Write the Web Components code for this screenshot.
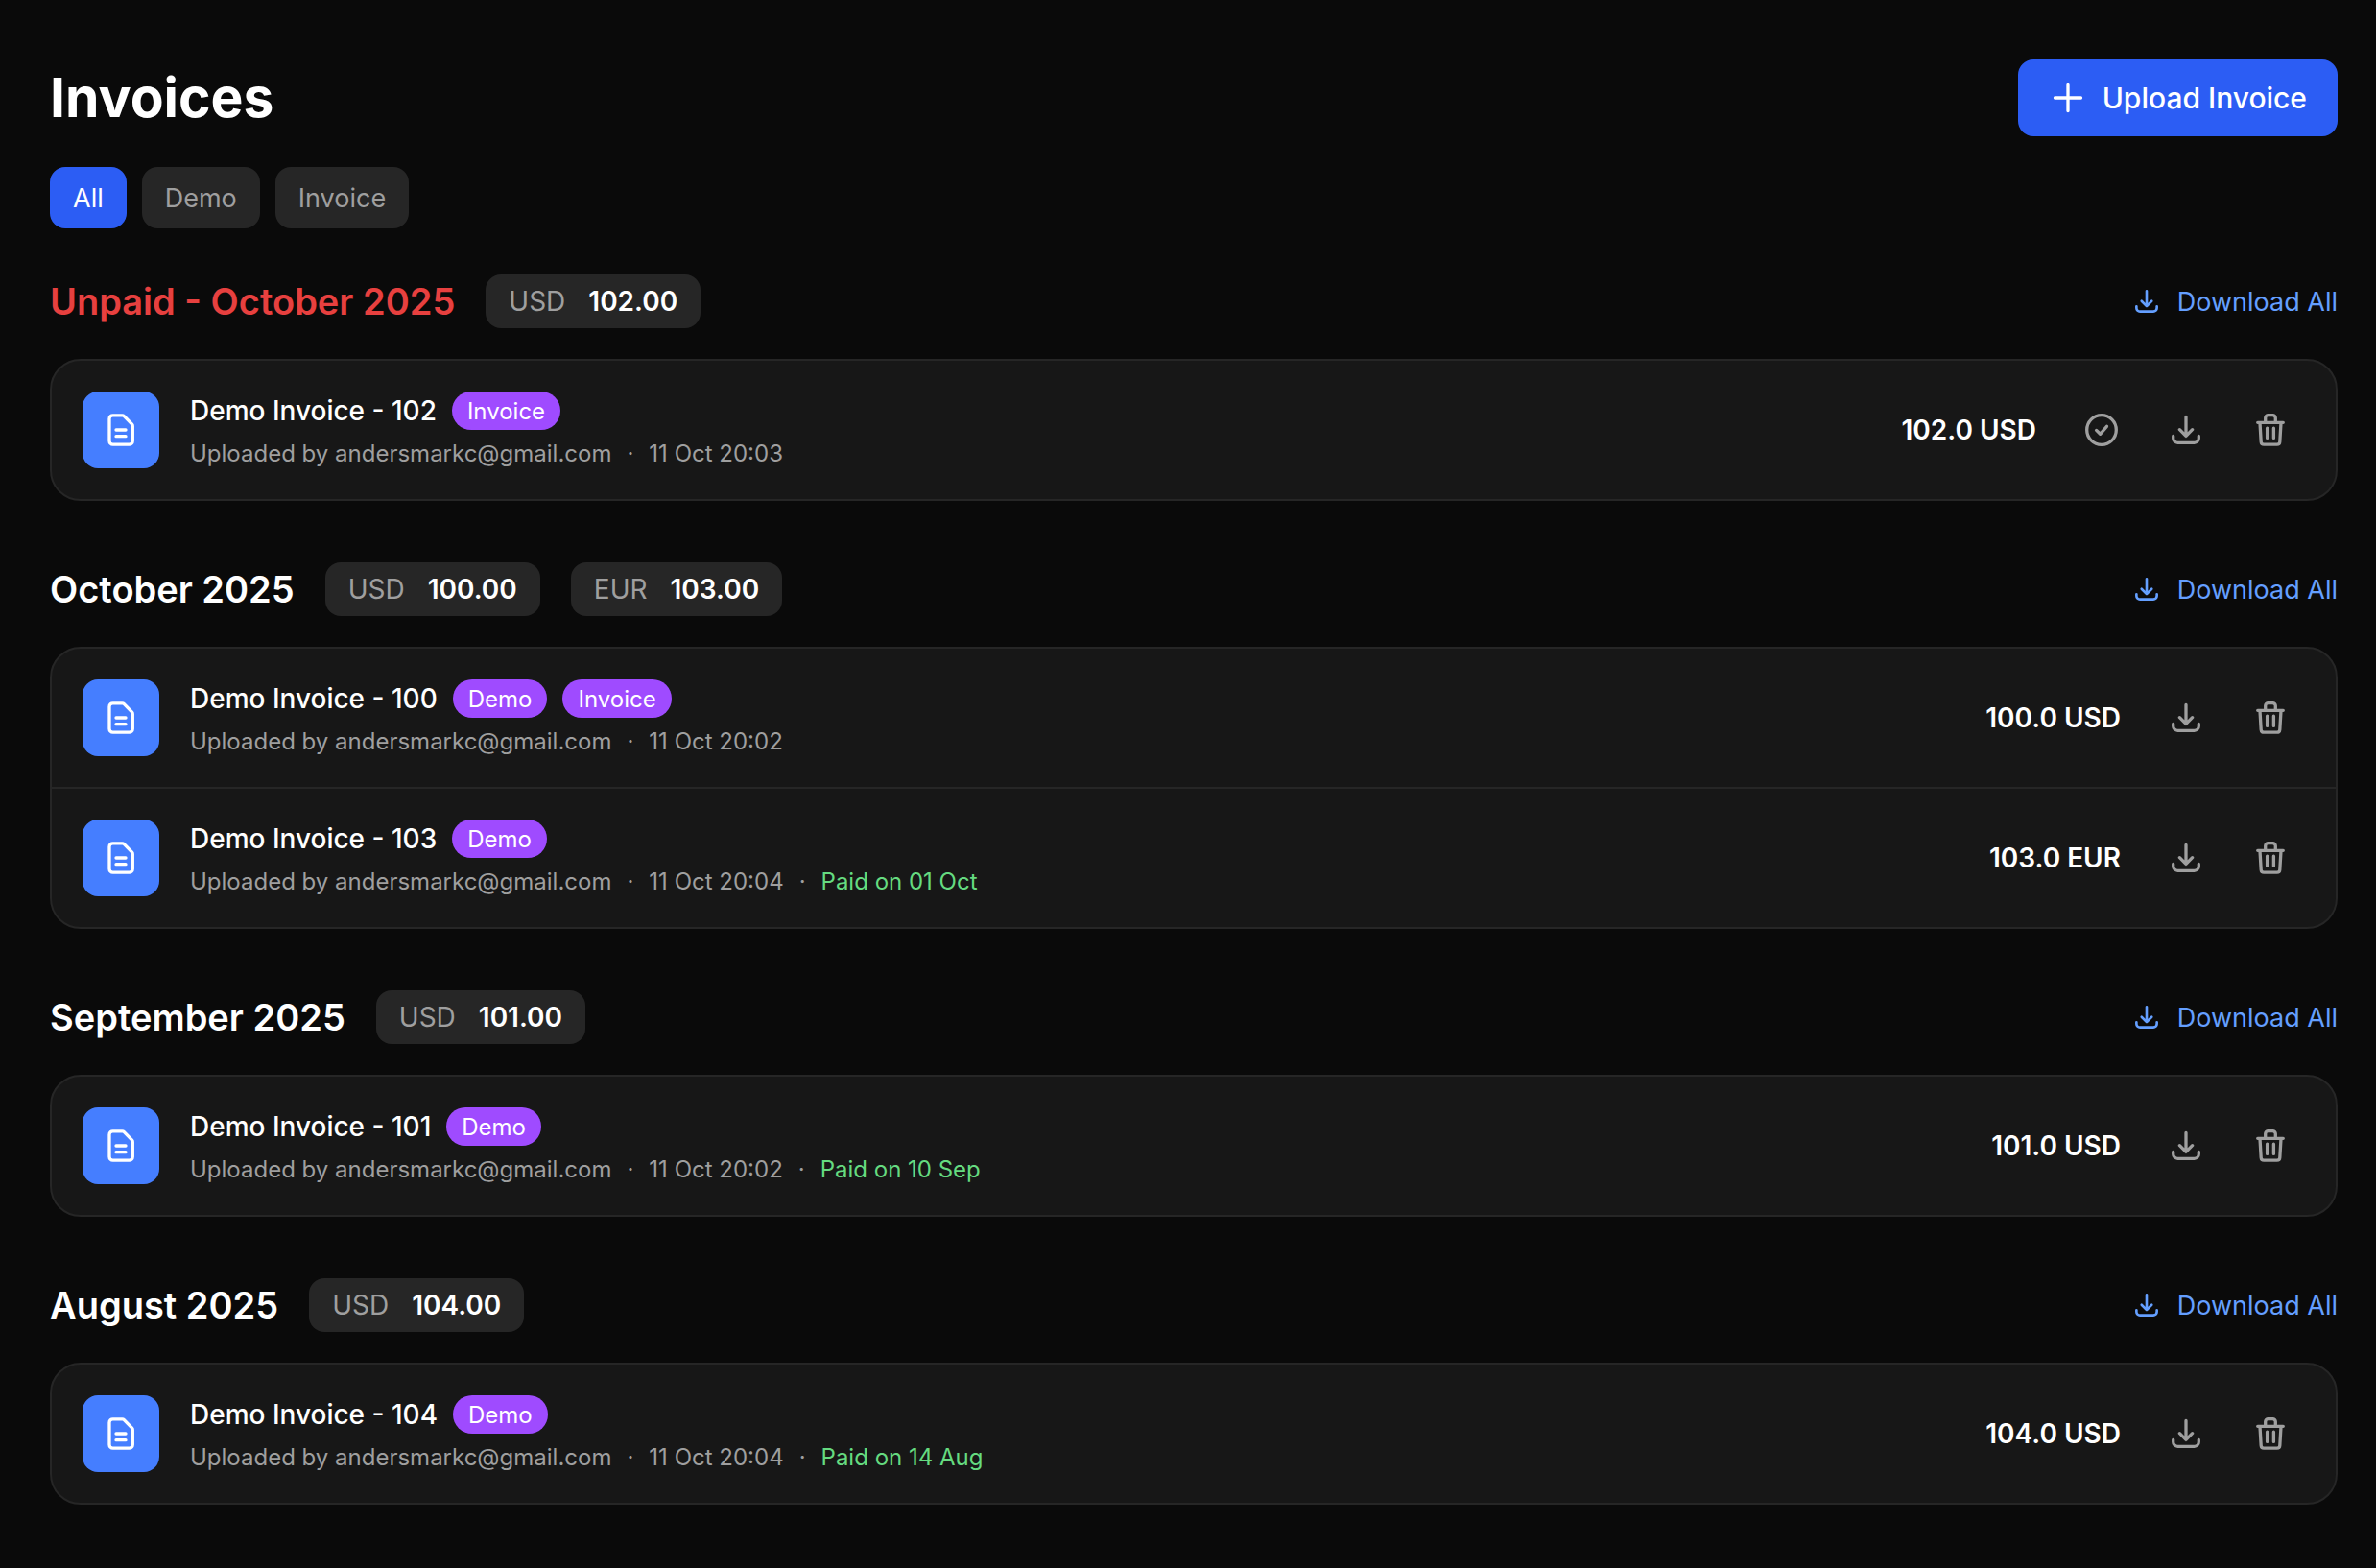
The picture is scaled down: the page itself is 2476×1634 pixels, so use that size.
<!DOCTYPE html>
<html lang="en">
<head>
<meta charset="utf-8">
<meta name="viewport" content="width=device-width, initial-scale=1">
<title>Invoices</title>
<style>
  :root {
    --bg: #0a0a0a; --surface: #171717; --line: #262626; --muted: #9f9f9f;
    --primary: #2c5df4; --tile: #457eff; --link: #649fff;
    --tag: #9f4bff; --danger: #e7403f; --success: #65db80;
    --text-sm: 24px; --text-md: 27px; --text-strong: 28px; --text-lg: 30px; --text-xl: 38px; --text-2xl: 57px;
  }
  body { margin: 0; min-height: 100vh; background: var(--bg); color: #fff; font-family: Inter, "Liberation Sans", sans-serif; }
</style>
</head>
<body>
<invoices-page></invoices-page>
<script>
const define = (name, html, init) => {
  const template = document.createElement('template');
  template.innerHTML = `<style>*{box-sizing:border-box}button,a{font:inherit;color:inherit;border:0;background:none;padding:0;text-decoration:none;cursor:pointer;white-space:nowrap}</style>${html}`;
  customElements.define(name, class extends HTMLElement {
    connectedCallback() {
      if (this.shadowRoot) return;
      this.attachShadow({ mode: 'open' }).append(template.content.cloneNode(true));
      if (init) init(this, this.shadowRoot);
    }
  });
};

const ICONS = {
  plus: '<path d="M20 6.5v27M6.5 20h27"/>',
  check: '<circle cx="20" cy="20" r="15.3"/><path d="M14.6 20.4l4 3.9 6.9-8"/>',
  download: '<path d="M20 6.5v19.7M13.4 19.7l6.6 6.7 6.6-6.7M6.7 26.5v2.2a4.6 4.6 0 0 0 4.6 4.6h17.4a4.6 4.6 0 0 0 4.6-4.6v-2.2"/>',
  trash: '<path d="M6.7 12.3h26.6M9 12.6l1.2 19.8a3 3 0 0 0 3 2.8h13.6a3 3 0 0 0 3-2.8L31 12.6M14.7 12V7.6a3 3 0 0 1 3-3h4.6a3 3 0 0 1 3 3V12M16.6 18.2v10.2M23.4 18.2v10.2"/>',
  file: '<path d="M11.8 4.8h9.6a2.6 2.6 0 0 1 1.9.8l8.3 8.6a2.6 2.6 0 0 1 .7 1.8v15.6a3.6 3.6 0 0 1-3.6 3.6H11.6A3.6 3.6 0 0 1 8 31.6V8.4a3.6 3.6 0 0 1 3.8-3.6zM15 20h10M15 26.7h10"/>'
};

define('app-icon', `
<style>
  :host { display: block; flex: none; width: 40px; height: 40px; }
  :host([size="small"]) { width: 32px; height: 32px; }
  svg { display: block; width: 100%; height: 100%; fill: none; stroke: currentColor; stroke-width: 3.3; stroke-linecap: round; stroke-linejoin: round; }
</style><svg viewBox="0 0 40 40" aria-hidden="true"></svg>`,
(el, root) => { root.querySelector('svg').innerHTML = ICONS[el.getAttribute('name')]; });

define('primary-button', `
<style>
  :host { display: block; }
  button { display: flex; align-items: center; gap: 16px; height: 80px; padding: 0 32px; border-radius: 16px; background: var(--primary); font-size: var(--text-lg); font-weight: 500; }
</style><button type="button"><app-icon name="plus"></app-icon><slot></slot></button>`);

define('filter-chip', `
<style>
  :host { display: block; }
  button { height: 64px; padding: 0 24px; border-radius: 16px; background: var(--line); color: var(--muted); font-size: var(--text-md); }
  :host([active]) button { background: var(--primary); color: #fff; }
</style><button type="button"><slot></slot></button>`,
(el, root) => root.querySelector('button').setAttribute('aria-pressed', el.hasAttribute('active')));

define('currency-total', `
<style>
  :host { display: flex; align-items: center; gap: 24px; height: 56px; padding: 0 24px; border-radius: 16px; background: var(--line); font-size: var(--text-strong); white-space: nowrap; }
  span { color: var(--muted); } strong { font-weight: 600; }
</style><span><slot name="currency"></slot></span><strong><slot></slot></strong>`);

define('download-link', `
<style>
  :host { display: block; margin-left: auto; }
  a { display: flex; align-items: center; gap: 16px; color: var(--link); font-size: var(--text-md); }
</style><a href="#"><app-icon name="download" size="small"></app-icon><slot></slot></a>`);

define('invoice-tag', `
<style>
  :host { display: flex; align-items: center; height: 40px; padding: 0 16px; border-radius: 20px; background: var(--tag); font-size: var(--text-sm); font-weight: 400; white-space: nowrap; }
</style><slot></slot>`);

define('icon-button', `
<style>
  :host { display: block; }
  button { display: block; padding: 16px; color: var(--muted); }
</style><button type="button"></button>`,
(el, root) => {
  const button = root.querySelector('button');
  const icon = document.createElement('app-icon');
  icon.setAttribute('name', el.getAttribute('icon'));
  button.append(icon);
  button.setAttribute('aria-label', el.getAttribute('label'));
});

define('invoice-row', `
<style>
  :host { display: flex; align-items: center; padding: 32px; }
  :host([divided]) { border-top: 2px solid var(--line); }
  .tile { display: grid; place-items: center; flex: none; width: 80px; height: 80px; border-radius: 16px; background: var(--tile); }
  .body { flex: 1; min-width: 0; margin-left: 32px; display: flex; flex-direction: column; gap: 8px; }
  .title, .meta, .actions { display: flex; align-items: center; gap: 16px; white-space: nowrap; }
  .title { height: 40px; font-size: var(--text-strong); font-weight: 500; }
  h3 { margin: 0; font: inherit; }
  .meta { height: 32px; font-size: var(--text-sm); color: var(--muted); }
  .paid { color: var(--success); }
  .amount { margin-right: 32px; font-size: var(--text-strong); font-weight: 600; white-space: nowrap; }
</style>
<div class="tile"><app-icon name="file"></app-icon></div>
<div class="body"><div class="title"><h3></h3><slot name="tags"></slot></div><div class="meta"></div></div>
<div class="amount"></div>
<div class="actions"></div>`,
(el, root) => {
  const get = n => el.getAttribute(n);
  root.querySelector('h3').textContent = get('name');
  root.querySelector('.amount').textContent = get('amount');
  const meta = [`<span>Uploaded by ${get('by')}</span>`, `<span>${get('date')}</span>`];
  if (get('paid')) meta.push(`<span class="paid">${get('paid')}</span>`);
  root.querySelector('.meta').innerHTML = meta.join('<span>·</span>');
  root.querySelector('.actions').innerHTML =
    (el.hasAttribute('unpaid') ? '<icon-button icon="check" label="Mark as paid"></icon-button>' : '') +
    '<icon-button icon="download" label="Download"></icon-button><icon-button icon="trash" label="Delete"></icon-button>';
});

define('invoice-group', `
<style>
  :host { display: block; }
  header { display: flex; align-items: center; gap: 32px; height: 56px; margin-bottom: 32px; }
  h2 { margin: 0; font-size: var(--text-xl); line-height: 56px; font-weight: 600; white-space: nowrap; }
  :host([overdue]) h2 { color: var(--danger); }
  .card { border: 2px solid var(--line); border-radius: 32px; background: var(--surface); }
</style>
<section><header><h2></h2><slot name="totals"></slot><download-link>Download All</download-link></header>
<div class="card"><slot></slot></div></section>`,
(el, root) => { root.querySelector('h2').textContent = el.getAttribute('heading'); });

define('invoices-page', `
<style>
  :host { display: block; padding: 62px 40px 66px 52px; }
  .top { display: flex; align-items: center; justify-content: space-between; margin-bottom: 32px; }
  h1 { margin: 0; font-size: var(--text-2xl); line-height: 80px; font-weight: 700; }
  nav { display: flex; gap: 16px; margin-bottom: 48px; }
  main { display: flex; flex-direction: column; gap: 64px; }
</style>
<div class="top"><h1>Invoices</h1><primary-button>Upload Invoice</primary-button></div>
<nav aria-label="Filter"><filter-chip active>All</filter-chip><filter-chip>Demo</filter-chip><filter-chip>Invoice</filter-chip></nav>
<main></main>`,
(el, root) => {
  const by = 'andersmarkc@gmail.com';
  const groups = [
    { heading: 'Unpaid - October 2025', overdue: true, totals: [['USD', '102.00']], rows: [
      { name: 'Demo Invoice - 102', tags: ['Invoice'], date: '11 Oct 20:03', amount: '102.0 USD', unpaid: true }] },
    { heading: 'October 2025', totals: [['USD', '100.00'], ['EUR', '103.00']], rows: [
      { name: 'Demo Invoice - 100', tags: ['Demo', 'Invoice'], date: '11 Oct 20:02', amount: '100.0 USD' },
      { name: 'Demo Invoice - 103', tags: ['Demo'], date: '11 Oct 20:04', paid: 'Paid on 01 Oct', amount: '103.0 EUR' }] },
    { heading: 'September 2025', totals: [['USD', '101.00']], rows: [
      { name: 'Demo Invoice - 101', tags: ['Demo'], date: '11 Oct 20:02', paid: 'Paid on 10 Sep', amount: '101.0 USD' }] },
    { heading: 'August 2025', totals: [['USD', '104.00']], rows: [
      { name: 'Demo Invoice - 104', tags: ['Demo'], date: '11 Oct 20:04', paid: 'Paid on 14 Aug', amount: '104.0 USD' }] }
  ];
  root.querySelector('main').innerHTML = groups.map(g => `
    <invoice-group heading="${g.heading}"${g.overdue ? ' overdue' : ''}>
      ${g.totals.map(([c, v]) => `<currency-total slot="totals"><span slot="currency">${c}</span>${v}</currency-total>`).join('')}
      ${g.rows.map((r, i) => `<invoice-row${i ? ' divided' : ''} name="${r.name}" by="${by}" date="${r.date}" amount="${r.amount}"${r.paid ? ` paid="${r.paid}"` : ''}${r.unpaid ? ' unpaid' : ''}>${r.tags.map(t => `<invoice-tag slot="tags">${t}</invoice-tag>`).join('')}</invoice-row>`).join('')}
    </invoice-group>`).join('');
});
</script>
</body>
</html>
